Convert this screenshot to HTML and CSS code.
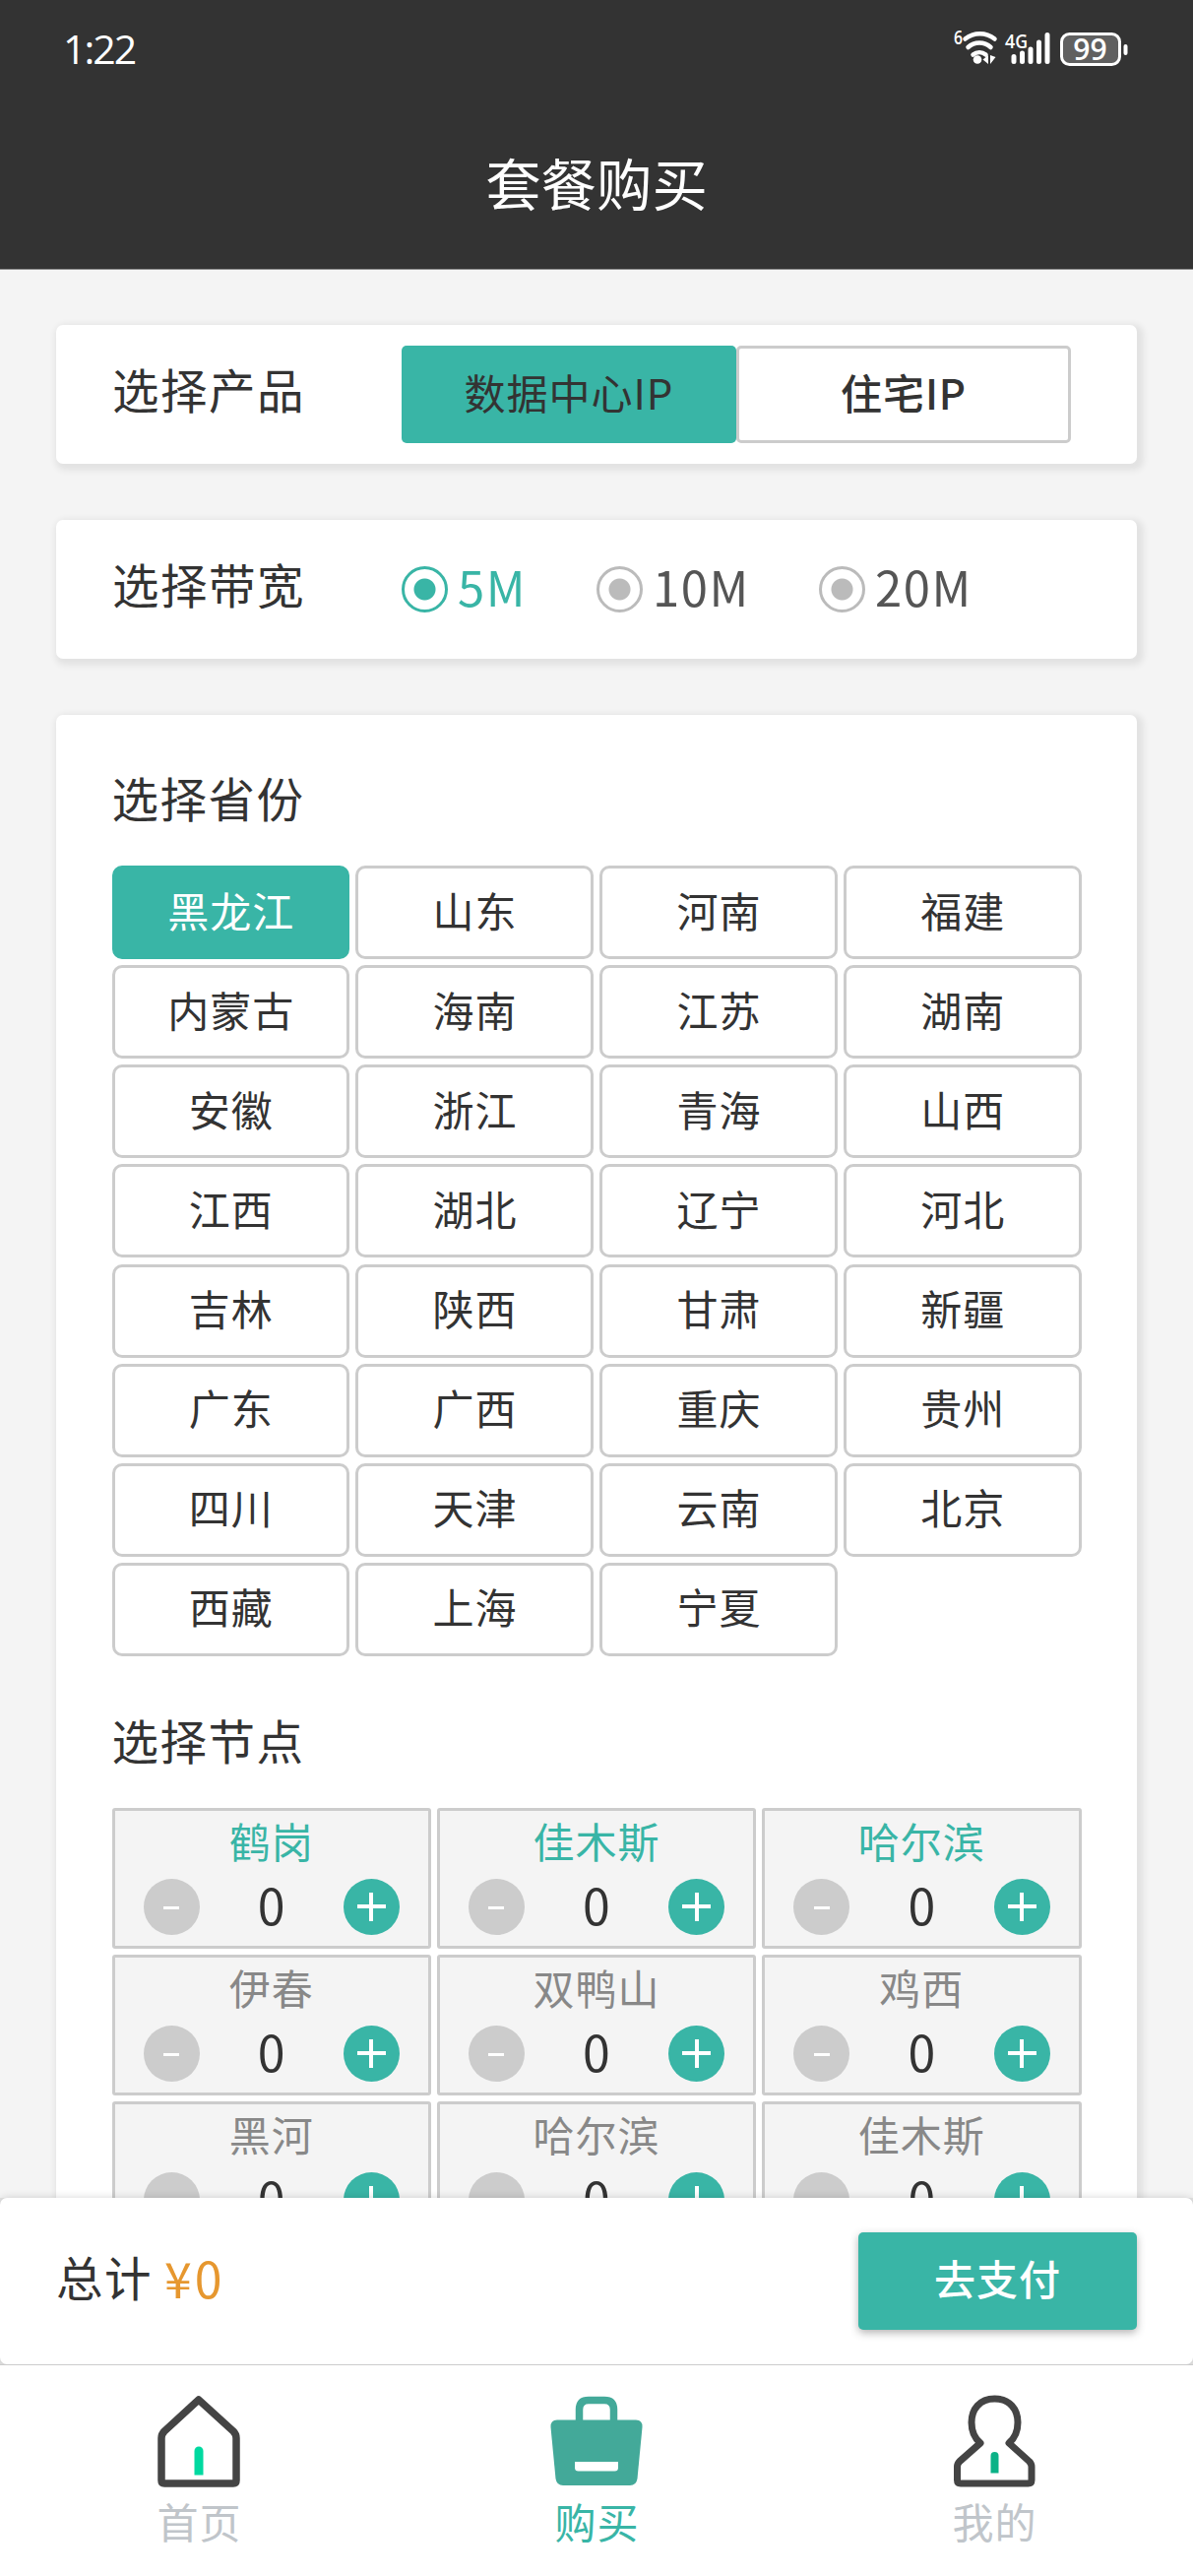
FILE: index.html
```html
<!DOCTYPE html>
<html lang="zh-CN">
<head>
<meta charset="utf-8">
<title>套餐购买</title>
<link rel="stylesheet" href="styles.css">
</head>
<body>
<div class="app">
  <header class="header">
    <div class="status">
      <span class="clock">1:22</span>
      <svg class="status-icons" width="190" height="50" viewBox="0 0 190 50" aria-hidden="true">
        <text class="tiny" x="4" y="21" textLength="9" lengthAdjust="spacingAndGlyphs">6</text>
        <g fill="none" stroke="#fff" stroke-width="4.500" stroke-linecap="round">
          <path d="M15.500 15.500a24 24 0 0 1 30 0"/>
          <path d="M18.500 24a17 17 0 0 1 23 0"/>
          <path d="M23.500 31.500a10.500 10.500 0 0 1 13 0"/>
        </g>
        <circle cx="28" cy="36.500" r="4.300" fill="#fff"/>
        <path d="M39 32v9l-5.500-4.500zM41 32v9l5.500-7z" fill="#fff"/>
        <text class="tiny" x="56" y="25" textLength="23" lengthAdjust="spacingAndGlyphs">4G</text>
        <path d="M65 33.500v5M73.500 30v8.500M82 26v12.500M90.500 19v19.500M99 11.500v27" stroke="#fff" stroke-width="5" stroke-linecap="round"/>
        <rect x="113.500" y="10.500" width="59" height="31" rx="8" fill="#606060" stroke="#fff" stroke-width="3"/>
        <text class="level" x="142.500" y="37" text-anchor="middle">99</text>
        <rect x="176.500" y="21" width="4" height="11" rx="2" fill="#fff"/>
      </svg>
    </div>
    <h1 class="title">套餐购买</h1>
  </header>

  <main class="content">
    <section class="card card-row">
      <h2 class="label">选择产品</h2>
      <div class="segment">
        <button class="seg seg-on">数据中心IP</button>
        <button class="seg seg-off">住宅IP</button>
      </div>
    </section>

    <section class="card card-row">
      <h2 class="label">选择带宽</h2>
      <div class="radios">
        <div class="radio radio-on"><i class="dot"></i><span>5M</span></div>
        <div class="radio"><i class="dot"></i><span>10M</span></div>
        <div class="radio"><i class="dot"></i><span>20M</span></div>
      </div>
    </section>

    <section class="card card-main">
      <h2 class="label">选择省份</h2>
      <div class="provinces">
        <button class="prov prov-on">黑龙江</button><button class="prov">山东</button><button class="prov">河南</button><button class="prov">福建</button>
        <button class="prov">内蒙古</button><button class="prov">海南</button><button class="prov">江苏</button><button class="prov">湖南</button>
        <button class="prov">安徽</button><button class="prov">浙江</button><button class="prov">青海</button><button class="prov">山西</button>
        <button class="prov">江西</button><button class="prov">湖北</button><button class="prov">辽宁</button><button class="prov">河北</button>
        <button class="prov">吉林</button><button class="prov">陕西</button><button class="prov">甘肃</button><button class="prov">新疆</button>
        <button class="prov">广东</button><button class="prov">广西</button><button class="prov">重庆</button><button class="prov">贵州</button>
        <button class="prov">四川</button><button class="prov">天津</button><button class="prov">云南</button><button class="prov">北京</button>
        <button class="prov">西藏</button><button class="prov">上海</button><button class="prov">宁夏</button>
      </div>
      <h2 class="label label-nodes">选择节点</h2>
      <div class="nodes">
        <div class="node node-on"><div class="name">鹤岗</div><div class="stepper"><i class="minus"></i><b class="count">0</b><i class="plus"></i></div></div>
        <div class="node node-on"><div class="name">佳木斯</div><div class="stepper"><i class="minus"></i><b class="count">0</b><i class="plus"></i></div></div>
        <div class="node node-on"><div class="name">哈尔滨</div><div class="stepper"><i class="minus"></i><b class="count">0</b><i class="plus"></i></div></div>
        <div class="node"><div class="name">伊春</div><div class="stepper"><i class="minus"></i><b class="count">0</b><i class="plus"></i></div></div>
        <div class="node"><div class="name">双鸭山</div><div class="stepper"><i class="minus"></i><b class="count">0</b><i class="plus"></i></div></div>
        <div class="node"><div class="name">鸡西</div><div class="stepper"><i class="minus"></i><b class="count">0</b><i class="plus"></i></div></div>
        <div class="node"><div class="name">黑河</div><div class="stepper"><i class="minus"></i><b class="count">0</b><i class="plus"></i></div></div>
        <div class="node"><div class="name">哈尔滨</div><div class="stepper"><i class="minus"></i><b class="count">0</b><i class="plus"></i></div></div>
        <div class="node"><div class="name">佳木斯</div><div class="stepper"><i class="minus"></i><b class="count">0</b><i class="plus"></i></div></div>
      </div>
    </section>
  </main>

  <div class="checkout-wrap">
    <div class="checkout">
      <span class="total">总计</span><span class="price">¥0</span>
      <button class="pay">去支付</button>
    </div>
  </div>

  <nav class="tabs">
    <a class="tab">
      <svg width="96" height="96" viewBox="0 0 96 96" aria-hidden="true">
        <path d="M47.800 7 L83 39 Q86 42 86 46 V89 Q86 92 83 92 H13 Q10 92 10 89 V46 Q10 42 13 39 Z" fill="none" stroke="#444" stroke-width="7.500" stroke-linejoin="round"/>
        <path d="M43.500 83.500V59a4.500 4.500 0 0 1 9 0v24.500z" fill="#00d9a0"/>
      </svg>
      <span>首页</span>
    </a>
    <a class="tab tab-on">
      <svg width="96" height="96" viewBox="0 0 96 96" aria-hidden="true">
        <path d="M30.500 30V17Q30.500 7.500 40 7.500H56Q65.500 7.500 65.500 17V30" fill="none" stroke="#43a999" stroke-width="7.500"/>
        <path d="M8 27.500H88Q95 27.500 94.500 35L89.500 87Q88.500 94 82 94H14Q7.500 94 6.500 87L1.500 35Q1 27.500 8 27.500Z" fill="#43a999"/>
        <path d="M26 70H70V76Q70 79.500 66.500 79.500H29.500Q26 79.500 26 76Z" fill="#fff"/>
      </svg>
      <span>购买</span>
    </a>
    <a class="tab">
      <svg width="96" height="96" viewBox="0 0 96 96" aria-hidden="true">
        <path d="M48.500 6C33 6 25 17 25 30C25 39 28 46 34 51L13 69.500Q10.500 72 10.500 75V88.500Q10.500 92 14 92H82.500Q86 92 86 88.500V75Q86 72 83.500 69.500L63 51C69 46 72 39 72 30C72 17 64 6 48.500 6Z" fill="none" stroke="#444" stroke-width="7" stroke-linejoin="round"/>
        <path d="M44.500 81.500V64a4 4 0 0 1 8 0v17.500z" fill="#0bb287"/>
      </svg>
      <span>我的</span>
    </a>
  </nav>
</div>
</body>
</html>
```
FILE: styles.css
```css
* { box-sizing: border-box; margin: 0; padding: 0; }

body {
  background: #f4f4f4;
  color: #333;
  font-family: "Noto Sans CJK SC", "Noto Sans", sans-serif;
}

button { font: inherit; color: inherit; border: 0; background: none; }
h1, h2, b { font-weight: 400; }

.app {
  width: 1212px;
  height: 2616px;
  display: flex;
  flex-direction: column;
  overflow: hidden;
}

.header {
  flex: none;
  height: 274px;
  background: #333;
  border-bottom: 1px solid #8e8e8e;
  color: #fff;
}
.status {
  height: 100px;
  padding: 0 57px 0 64px;
  display: flex;
  align-items: center;
  justify-content: space-between;
}
.clock {
  padding-bottom: 2px;
  font-family: "Open Sans", sans-serif;
  font-size: 41px;
  font-weight: 500;
  letter-spacing: -2px;
}
.status-icons { margin-bottom: 2px; }
.tiny { font: 600 20px "Open Sans", sans-serif; fill: #fff; }
.level { font: 600 30px "Open Sans", sans-serif; fill: #fff; }
.title {
  height: 173px;
  line-height: 169px;
  font-size: 56.400px;
  text-align: center;
}

.content {
  flex: 1;
  min-height: 0;
  overflow: hidden;
  padding: 56px 57px 0;
  display: flex;
  flex-direction: column;
  gap: 57px;
}
.card {
  flex: none;
  background: #fff;
  border-radius: 7px;
  box-shadow: 3px 3px 6px 4px rgba(0, 0, 0, .07);
}
.card-row {
  height: 141px;
  padding: 0 67px 0 57px;
  display: flex;
  align-items: center;
}
.label {
  font-size: 47.500px;
  letter-spacing: 1.500px;
  line-height: 60px;
}
.card-row .label { width: 294px; padding-bottom: 12px; }

.segment { display: flex; width: 680px; height: 99px; }
.seg {
  flex: none;
  width: 340px;
  padding-bottom: 7px;
  font-size: 42px;
  letter-spacing: 1px;
  border-radius: 5px;
}
.seg-on { background: #39b5a6; }
.seg-off { border: 3px solid #ccc; font-weight: 500; }

.radios {
  display: grid;
  grid-template-columns: 198px 226px auto;
  font-size: 49px;
  letter-spacing: 1.500px;
  color: #555;
}
.radio { display: flex; align-items: center; gap: 10px; }
.radio span { padding-bottom: 9px; }
.radio-on { color: #39b5a6; }
.dot {
  width: 47px;
  height: 47px;
  border: 3px solid #bbb;
  border-radius: 50%;
  background: radial-gradient(circle, #bbb 10.500px, transparent 11.500px);
}
.radio-on .dot {
  border-color: #39b5a6;
  background: radial-gradient(circle, #39b5a6 10.500px, transparent 11.500px);
}

.card-main { padding: 54px 56.500px 0; }
.provinces {
  margin-top: 39px;
  display: grid;
  grid-template-columns: repeat(4, 1fr);
  grid-auto-rows: 95px;
  gap: 6.140px;
}
.prov {
  padding: 0 0 7px 1px;
  border: 3px solid #ccc;
  border-radius: 10px;
  font-size: 42px;
  letter-spacing: 1px;
}
.prov-on { background: #39b5a6; border-color: #39b5a6; color: #fff; }

.label-nodes { margin-top: 55px; }
.nodes {
  margin-top: 39px;
  display: grid;
  grid-template-columns: repeat(3, 1fr);
  grid-auto-rows: 143px;
  gap: 6px;
}
.node {
  border: 3px solid #ccc;
  border-radius: 3px;
  background: #f4f4f4;
  color: #888;
}
.name {
  height: 64px;
  line-height: 60px;
  font-size: 42px;
  letter-spacing: 1px;
  text-align: center;
}
.node-on .name { color: #39b5a6; }
.stepper {
  padding: 5px 29px 0;
  display: flex;
  align-items: center;
  justify-content: space-between;
}
.minus, .plus { width: 57px; height: 57px; border-radius: 50%; }
.minus {
  background: linear-gradient(#fff, #fff) 50% 28px / 16px 3px no-repeat, #ccc;
}
.plus {
  background:
    linear-gradient(#fff, #fff) center / 29px 4px no-repeat,
    linear-gradient(#fff, #fff) center / 4px 29px no-repeat,
    #39b5a6;
}
.count { height: 57px; font-size: 50px; line-height: 51px; color: #333; }

.checkout-wrap { flex: none; height: 169px; background: #e4e4e4; position: relative; }
.checkout {
  height: 169px;
  padding: 0 57px;
  display: flex;
  align-items: center;
  background: #fff;
  border-radius: 7px;
  box-shadow: 0 0 8px rgba(0, 0, 0, .16);
}
.total { padding-bottom: 11px; font-size: 47.500px; letter-spacing: 1.500px; }
.price { margin-left: 12px; padding-bottom: 10px; font-size: 50px; letter-spacing: 3px; color: #e6972f; }
.pay {
  margin-left: auto;
  width: 283px;
  height: 99px;
  padding-bottom: 8px;
  border-radius: 5px;
  background: #39b5a6;
  color: #fff;
  font-size: 42px;
  font-weight: 500;
  letter-spacing: 1px;
  box-shadow: 0 3px 8px rgba(0, 0, 0, .3);
}

.tabs {
  flex: none;
  height: 215px;
  position: relative;
  display: grid;
  grid-template-columns: repeat(3, 1fr);
  background: #fff;
  border-top: 1px solid #ccc;
}
.tab {
  padding-top: 28px;
  display: flex;
  flex-direction: column;
  align-items: center;
  font-size: 42px;
  line-height: 60px;
  letter-spacing: 1px;
  color: #c0c5ca;
}
.tab span { margin-top: 4px; padding-left: 1px; }
.tab-on { color: #39b5a6; }
```
